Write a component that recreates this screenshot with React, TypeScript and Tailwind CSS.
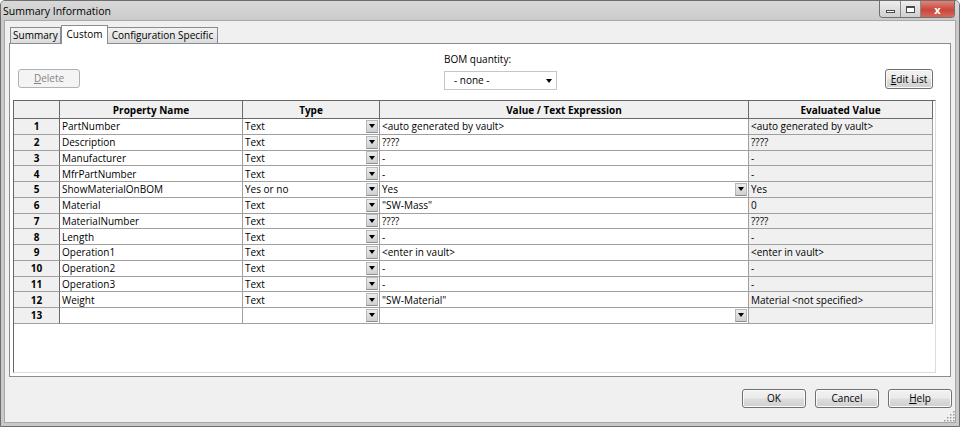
import React from 'react';

type Row = {
  name: string;
  type: string;
  value: string;
  evaluated: string;
  valueList?: boolean;
};

const rows: Row[] = [
  { name: 'PartNumber', type: 'Text', value: '<auto generated by vault>', evaluated: '<auto generated by vault>' },
  { name: 'Description', type: 'Text', value: '????', evaluated: '????' },
  { name: 'Manufacturer', type: 'Text', value: '-', evaluated: '-' },
  { name: 'MfrPartNumber', type: 'Text', value: '-', evaluated: '-' },
  { name: 'ShowMaterialOnBOM', type: 'Yes or no', value: 'Yes', evaluated: 'Yes', valueList: true },
  { name: 'Material', type: 'Text', value: '"SW-Mass"', evaluated: '0' },
  { name: 'MaterialNumber', type: 'Text', value: '????', evaluated: '????' },
  { name: 'Length', type: 'Text', value: '-', evaluated: '-' },
  { name: 'Operation1', type: 'Text', value: '<enter in vault>', evaluated: '<enter in vault>' },
  { name: 'Operation2', type: 'Text', value: '-', evaluated: '-' },
  { name: 'Operation3', type: 'Text', value: '-', evaluated: '-' },
  { name: 'Weight', type: 'Text', value: '"SW-Material"', evaluated: 'Material <not specified>' },
  { name: '', type: '', value: '', evaluated: '', valueList: true },
];

function Triangle() {
  return <span className="block h-0 w-0 border-x-[3.5px] border-t-[4px] border-x-transparent border-t-black" />;
}

function CellArrow() {
  return (
    <span className="ml-auto mr-[1px] flex h-[13px] w-[12px] shrink-0 items-center justify-center border border-[#b8b8b8] border-b-[#8e8e8e] bg-[linear-gradient(#ececec,#cfcfcf)]">
      <Triangle />
    </span>
  );
}

function WinButton({ children, disabled }: { children: React.ReactNode; disabled?: boolean }) {
  if (disabled) {
    return (
      <div className="flex h-full w-full items-center justify-center rounded-[3px] border border-[#adb2b5] bg-[#f4f4f4] text-[#838383]">
        {children}
      </div>
    );
  }
  return (
    <div className="flex h-full w-full items-center justify-center rounded-[3px] border border-[#707070] bg-[linear-gradient(#f2f2f2,#ebebeb_48%,#dddddd_52%,#cfcfcf)] text-black shadow-[inset_0_0_0_1px_#fbfbfb]">
      {children}
    </div>
  );
}

export default function App() {
  const cell = 'flex items-center border-r border-b border-[#a0a0a0] pl-[2px] text-[10px] leading-none text-black whitespace-nowrap overflow-hidden';

  return (
    <div className="relative flex h-[427px] w-[960px] flex-col overflow-hidden rounded-t-[5px] border border-[#6e6e6e] bg-[#c9c9c9] font-['Open_Sans',sans-serif]">
      {/* title bar */}
      <div className="flex h-[19px] items-start bg-[linear-gradient(#d9d9d9,#cbcbcb)]">
        <span className="mt-[3px] pl-[2px] text-[10.5px] leading-[14px] text-black">Summary Information</span>
        <div className="ml-auto mr-[4px] flex h-[17px] overflow-hidden rounded-b-[4px] border border-t-0 border-[#707070]">
          <div className="flex w-[21px] items-end justify-center border-r border-[#8a8a8a] bg-[linear-gradient(#eeeeee,#cfcfcf)] pb-[4px]">
            <span className="block h-[3px] w-[9px] border border-[#4a4a4a] bg-white" />
          </div>
          <div className="flex w-[20px] items-center justify-center border-r border-[#8a8a8a] bg-[linear-gradient(#eeeeee,#cfcfcf)]">
            <span className="block h-[7px] w-[9px] border border-[#4a4a4a] border-t-2 bg-white" />
          </div>
          <div className="flex w-[33px] items-center justify-center bg-[linear-gradient(#e0857b,#c9473a_55%,#d7685d)] text-[11px] font-bold leading-none text-white">
            x
          </div>
        </div>
      </div>

      {/* client area */}
      <div className="mx-[3px] mb-[3px] flex flex-1 flex-col border border-[#a8a8a8] bg-[#f0f0f0] text-[10px]">
        {/* tabs */}
        <div className="ml-[5px] flex h-[22px] items-end">
          <div className="flex h-[16px] w-[51px] items-center justify-center border border-b-0 border-[#898c95] bg-[linear-gradient(#f2f2f2,#dcdcdc)]">
            Summary
          </div>
          <div className="relative z-10 -mb-px flex h-[19px] w-[47px] items-center justify-center border border-b-0 border-[#898c95] bg-white pb-[2px]">
            Custom
          </div>
          <div className="flex h-[16px] w-[110px] items-center justify-center border border-l-0 border-b-0 border-[#898c95] bg-[linear-gradient(#f2f2f2,#dcdcdc)]">
            Configuration Specific
          </div>
        </div>

        {/* tab panel */}
        <div className="mx-[4px] flex h-[334px] flex-col border border-[#898c95] bg-white">
          <div className="flex h-[45px] items-start">
            <div className="ml-[8px] mt-[25px] h-[19px] w-[62px]">
              <WinButton disabled>
                <span><span className="underline">D</span>elete</span>
              </WinButton>
            </div>
            <div className="ml-[364px] mt-[8px] flex flex-col">
              <span className="h-[14px] leading-[14px]">BOM quantity:</span>
              <div className="mt-[5px] flex h-[19px] w-[113px] items-center border border-[#c6c6c6] bg-white pl-[9px] pr-[4px]">
                <span>- none -</span>
                <span className="ml-auto">
                  <Triangle />
                </span>
              </div>
            </div>
            <div className="ml-auto mr-[17px] mt-[25px] h-[20px] w-[48px]">
              <WinButton>
                <span><span className="underline">E</span>dit List</span>
              </WinButton>
            </div>
          </div>

          {/* grid */}
          <div className="ml-[3px] mt-[11px] h-[273px] w-[923px] border-l border-t border-l-[#666666] border-t-[#666666] border-r border-b border-r-[#dcdcdc] border-b-[#dcdcdc] bg-white">
            <div className="grid grid-cols-[46px_183px_137px_369px_184px] grid-rows-[18px_repeat(13,15.75px)]">
              <div className="border-r border-b border-[#6a6a6a] bg-[#f0f0f0]" />
              {['Property Name', 'Type', 'Value / Text Expression', 'Evaluated Value'].map((h) => (
                <div key={h} className="flex items-center justify-center border-r border-b border-[#6a6a6a] bg-[#f0f0f0] text-[10px] font-bold leading-none">
                  {h}
                </div>
              ))}
              {rows.map((r, i) => (
                <React.Fragment key={i}>
                  <div className="flex items-center justify-center border-r border-b border-r-[#6a6a6a] border-b-[#a0a0a0] bg-[#f0f0f0] text-[10px] font-bold leading-none">
                    {i + 1}
                  </div>
                  <div className={cell}>{r.name}</div>
                  <div className={cell}>
                    <span>{r.type}</span>
                    <CellArrow />
                  </div>
                  <div className={cell}>
                    <span>{r.value}</span>
                    {r.valueList && <CellArrow />}
                  </div>
                  <div className={`${cell} bg-[#f0f0f0]`}>{r.evaluated}</div>
                </React.Fragment>
              ))}
            </div>
          </div>
        </div>

        {/* dialog buttons */}
        <div className="mr-[3px] mt-[12px] flex justify-end gap-[9px]">
          <div className="h-[19px] w-[64px]">
            <WinButton>OK</WinButton>
          </div>
          <div className="h-[19px] w-[64px]">
            <WinButton>Cancel</WinButton>
          </div>
          <div className="h-[19px] w-[64px]">
            <WinButton>
              <span><span className="underline">H</span>elp</span>
            </WinButton>
          </div>
        </div>
      </div>

      {/* size grip */}
      <svg className="absolute bottom-[4px] right-[4px]" width="11" height="11" viewBox="0 0 11 11">
        {[
          [9, 1], [9, 4], [6, 4], [9, 7], [6, 7], [3, 7], [9, 10], [6, 10], [3, 10], [0, 10],
        ].map(([x, y], k) => (
          <rect key={k} x={x} y={y - 1} width="1.5" height="1.5" fill="#9a9a9a" />
        ))}
      </svg>
    </div>
  );
}
